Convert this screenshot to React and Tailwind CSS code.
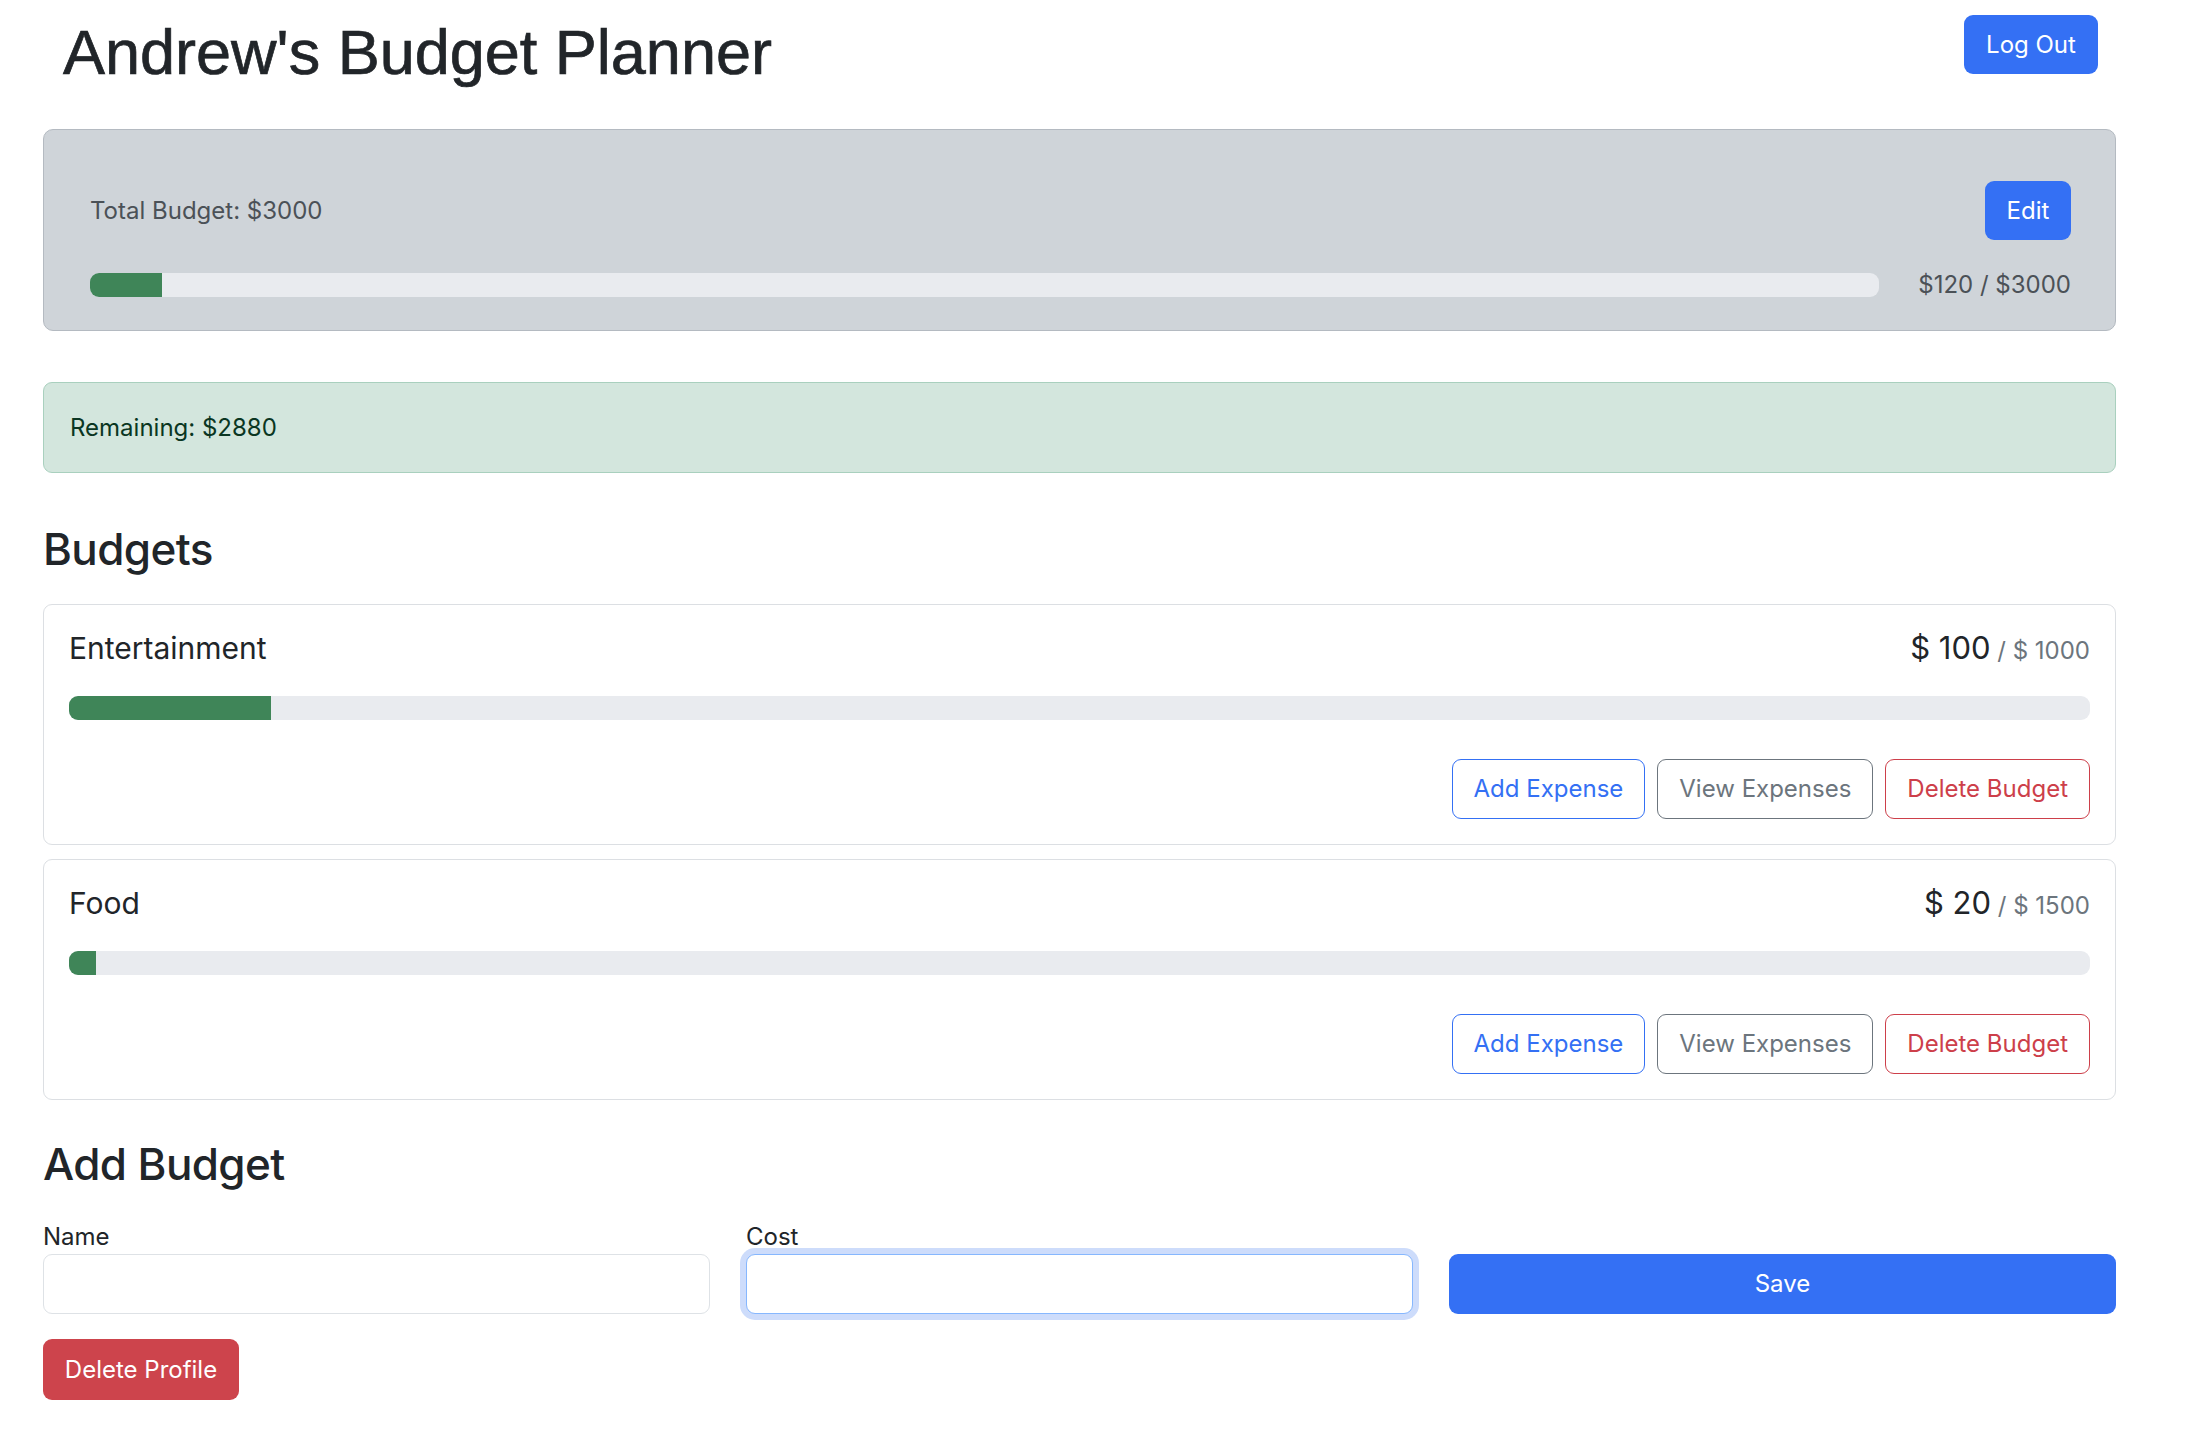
import React from 'react';

const budgets = [
  { id: 1, name: 'Entertainment', spent: 100, max: 1000 },
  { id: 2, name: 'Food', spent: 20, max: 1500 },
];

function ProgressBar({ value, max, className = '' }) {
  const pct = Math.min(100, (value / max) * 100);
  return (
    <div className={`h-[24px] bg-[#e9ebef] rounded-[9px] overflow-hidden flex ${className}`}>
      <div className="h-full bg-[#3f8558]" style={{ width: `${pct}%` }}></div>
    </div>
  );
}

function BudgetCard({ budget }) {
  return (
    <div className="border border-[#dcdfe3] rounded-[9px] bg-white px-[25px] pt-[25px] pb-[25px]">
      {/* header row */}
      <div className="flex items-baseline justify-between h-[36px]">
        <span className="text-[30px] leading-[36px] text-[#212529]">{budget.name}</span>
        <span className="leading-[36px]">
          <span className="text-[31px] text-[#212529]">$ {budget.spent}</span>
          <span className="text-[24px] text-[#6c757d]"> / $ {budget.max}</span>
        </span>
      </div>
      <ProgressBar value={budget.spent} max={budget.max} className="mt-[30px]" />
      <div className="flex justify-end gap-[12px] mt-[39px]">
        <button className="h-[60px] px-[21px] border border-[#3470f4] text-[#3470f4] rounded-[9px] text-[24px] leading-[36px] bg-white">
          Add Expense
        </button>
        <button className="h-[60px] px-[21px] border border-[#6c757d] text-[#6c757d] rounded-[9px] text-[24px] leading-[36px] bg-white">
          View Expenses
        </button>
        <button className="h-[60px] px-[21px] border border-[#cd3f4a] text-[#cd3f4a] rounded-[9px] text-[24px] leading-[36px] bg-white">
          Delete Budget
        </button>
      </div>
    </div>
  );
}

export default function App() {
  const total = 3000;
  const spent = budgets.reduce((s, b) => s + b.spent, 0);

  return (
    <div className="min-h-screen bg-white font-['Inter','Noto_Sans',sans-serif] text-[#212529]">
      <div className="ml-[43px] w-[2073px] pb-[34px]">
        {/* Header */}
        <div className="flex justify-between items-start pl-[20px] pr-[18px]">
          <h1 className="font-['Liberation_Sans',Arial,sans-serif] font-normal [-webkit-text-stroke:0.7px] text-[63px] leading-[76px] mt-[14px]">
            Andrew's Budget Planner
          </h1>
          <button className="mt-[15px] h-[59px] w-[134px] bg-[#3470f4] text-white rounded-[9px] text-[24px] leading-[36px]">
            Log Out
          </button>
        </div>

        {/* Total budget */}
        <div className="mt-[39px] bg-[#cfd4d9] border border-[#b4bac1] rounded-[10px] pl-[46px] pr-[44px] pt-[51px] pb-[27px] text-[#4b5157]">
          <div className="flex items-center justify-between">
            <span className="text-[24px] leading-[36px]">Total Budget: ${total}</span>
            <button className="h-[59px] w-[86px] bg-[#3470f4] text-white rounded-[9px] text-[24px] leading-[36px]">
              Edit
            </button>
          </div>
          <div className="flex items-center mt-[27px] gap-[39px]">
            <ProgressBar value={spent} max={total} className="flex-1" />
            <span className="text-[24px] leading-[36px]">${spent} / ${total}</span>
          </div>
        </div>

        {/* Remaining */}
        <div className="mt-[51px] h-[91px] flex items-center bg-[#d3e6dd] border border-[#a9d0be] rounded-[9px] px-[26px] text-[#0a3622] text-[24px] leading-[36px]">
          Remaining: ${total - spent}
        </div>

        {/* Budgets */}
        <h2 className="mt-[50px] text-[44px] leading-[53px] font-medium tracking-[-0.6px]">Budgets</h2>
        <div className="mt-[28px] flex flex-col gap-[14px]">
          {budgets.map(b => (
            <BudgetCard key={b.id} budget={b} />
          ))}
        </div>

        {/* Add budget */}
        <h2 className="mt-[38px] text-[44px] leading-[53px] font-medium tracking-[-0.6px]">Add Budget</h2>
        <div className="mt-[29px] grid grid-cols-3 gap-x-[36px] items-end">
          <div className="flex flex-col">
            <label className="text-[24px] leading-[34px]">Name</label>
            <input
              type="text"
              className="h-[60px] border border-[#dee2e6] rounded-[9px] px-[18px] text-[24px] outline-none bg-white"
            />
          </div>
          <div className="flex flex-col">
            <label className="text-[24px] leading-[34px]">Cost</label>
            <input
              type="text"
              className="h-[60px] border border-[#86b7fe] rounded-[9px] px-[18px] text-[24px] outline-none bg-white ring-[6px] ring-[#cddcfb]"
            />
          </div>
          <button className="h-[60px] bg-[#3470f4] text-white rounded-[9px] text-[24px] leading-[36px]">
            Save
          </button>
        </div>

        <button className="mt-[25px] h-[61px] w-[196px] bg-[#cd444c] text-white rounded-[9px] text-[24px] leading-[36px]">
          Delete Profile
        </button>
      </div>
    </div>
  );
}
